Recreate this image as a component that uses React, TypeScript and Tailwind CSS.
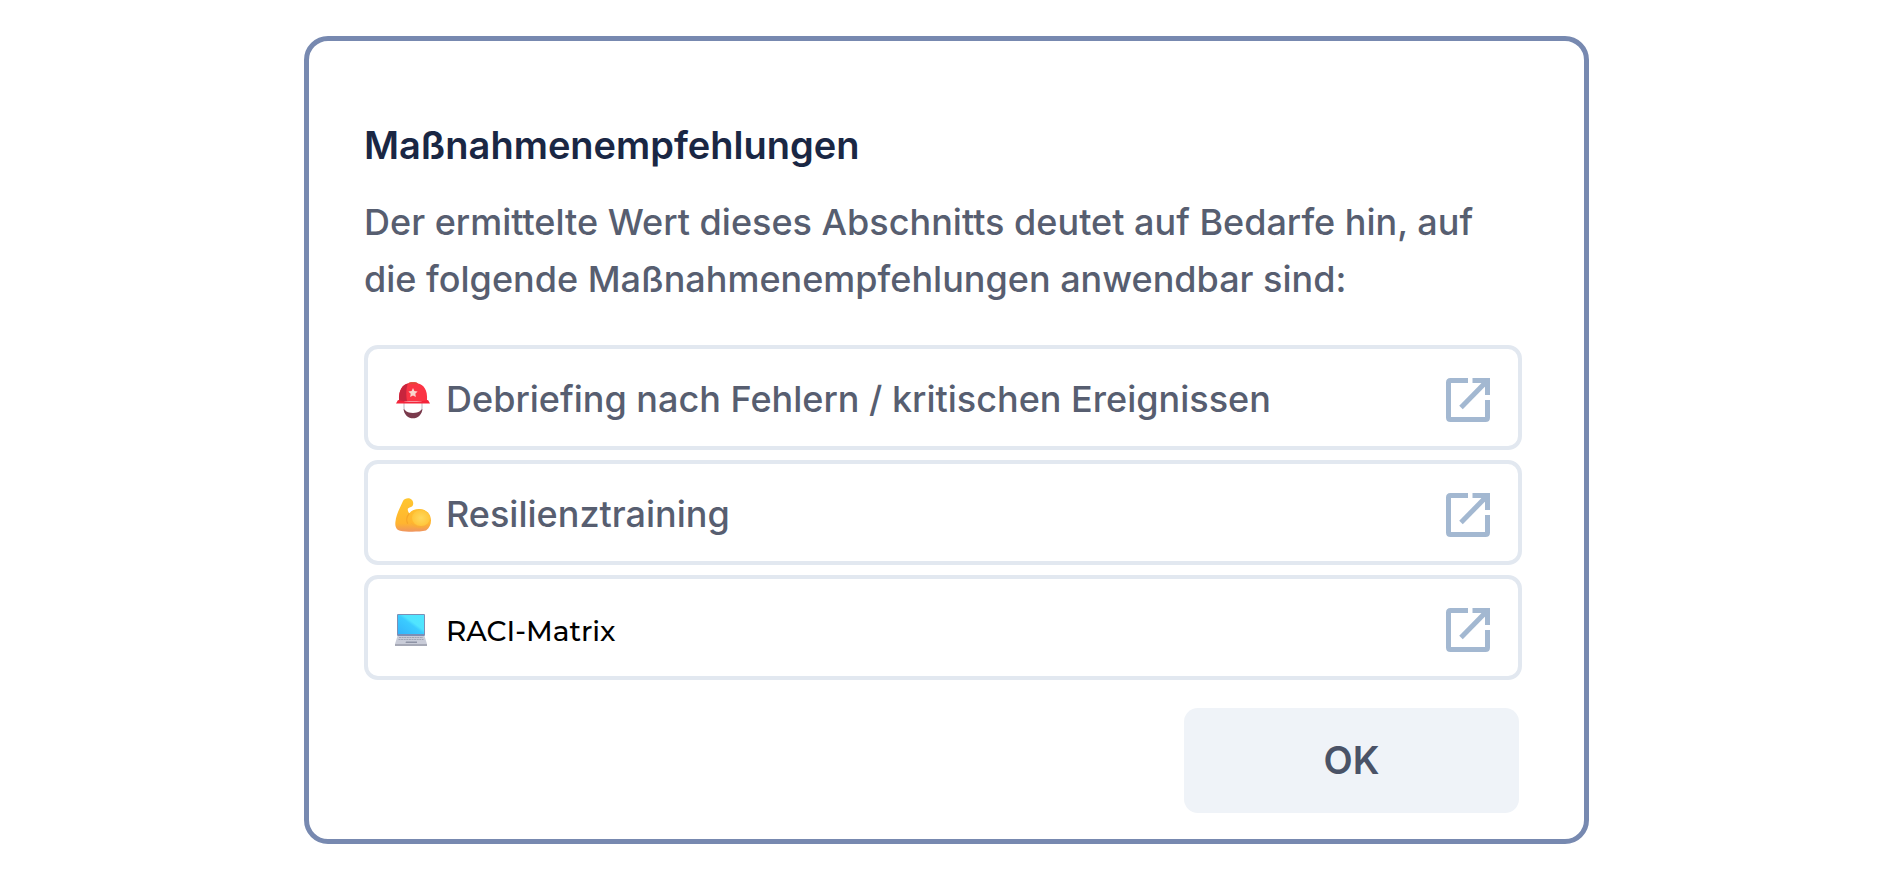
import type { ReactNode } from "react";

function HelmetIcon() {
  return (
    <svg viewBox="0 0 36 38" className="h-[38px] w-9 shrink-0" aria-hidden="true">
      <path d="M9 22v5c0 5 4 9 9 9s9-4 9-9v-5" fill="#fff" stroke="#c9c3cb" strokeWidth="1.2" />
      <path d="M8.500 28c2 1 3 4 9.500 4s7.500-3 9.500-4c-.8 6-4.700 9.300-9.500 9.300S9.300 34 8.500 28Z" fill="#7a3a4c" />
      <path d="M12 28.500c1.500 3 10.500 3 12 0v-2H12Z" fill="#fff" />
      <path d="M4 20C3.500 8 8 3.500 13 2.500c1-1.600 9-1.600 10 0C28 3.500 33 8 32 20Z" fill="#fb3444" />
      <path d="M4 20C3.500 8 8 3.500 13 2.500 11 7 11 14 12 20Z" fill="#c8253d" />
      <path d="M13 2.500c1-1.600 9-1.600 10 0-2.500 1-7.500 1-10 0Z" fill="#dd4a37" />
      <path d="M3 19c9 2 21 2 30 0l2 3.500H1Z" fill="#f3243a" />
      <path d="m18 7 1.400 3 3.200.4-2.300 2.300.6 3.300-2.900-1.600-2.900 1.600.6-3.300-2.300-2.300 3.200-.4Z" fill="#f9d5cd" />
    </svg>
  );
}

function BicepsIcon() {
  return (
    <svg viewBox="0 0 36 38" className="h-[38px] w-9 shrink-0" aria-hidden="true">
      <defs>
        <linearGradient id="skin" x1="0" y1="0" x2="0" y2="1">
          <stop offset="0" stopColor="#ffc62e" />
          <stop offset=".75" stopColor="#ffb52f" />
          <stop offset="1" stopColor="#ef9560" />
        </linearGradient>
        <radialGradient id="muscle">
          <stop offset="0" stopColor="#ffd95c" />
          <stop offset="1" stopColor="#ffc63b" />
        </radialGradient>
      </defs>
      <path
        d="M8 5c1.500-2.800 6-3.800 8.500-1.500 1.800 1.600 2.300 4.500 1 6.500-1 1.500-3.300 1.300-4.500 2.500-.7 1 .2 3.300 1.300 4.800 2.700-3.400 6.500-4.600 10.500-4.300C31.500 13.500 36 18 36 24.500c0 4-1.600 7.500-5 10-7 1.500-19 1.600-26 .2C.8 33.500 0 30 .4 26 1.200 18 5 12 8 5Z"
        fill="url(#skin)"
      />
      <ellipse cx="26" cy="22" rx="9" ry="8" fill="url(#muscle)" />
      <path d="M14.300 17.300c-2.500 3-3.300 7-1.600 10.500" fill="none" stroke="#f6a528" strokeWidth="1.200" />
      <path d="M16 27c3 3.500 8 5 13 3.500" fill="none" stroke="#f9b035" strokeWidth="1" />
    </svg>
  );
}

function LaptopIcon() {
  return (
    <svg viewBox="0 0 36 38" className="h-[38px] w-9 shrink-0" aria-hidden="true">
      <defs>
        <linearGradient id="screen" x1="0" y1="1" x2="1" y2="0">
          <stop offset="0" stopColor="#34b4fb" />
          <stop offset=".5" stopColor="#3bcbff" />
          <stop offset=".6" stopColor="#50e4ff" />
          <stop offset="1" stopColor="#4fe6ff" />
        </linearGradient>
      </defs>
      <rect x="2" y="3" width="28" height="22" rx="1" fill="#7d8fb5" />
      <rect x="3" y="4" width="26" height="19" fill="url(#screen)" />
      <path d="M2.500 25h27L32 33H0Z" fill="#c9ccd8" />
      <path d="M4 26.500h24M3.500 28.500h25" stroke="#a0a5b5" strokeWidth="1" strokeDasharray="2 .6" />
      <path d="M11 30.500h11v1.500H10.500Z" fill="#8e93a5" />
      <path d="M0 33h32v2H0Z" fill="#a6a9b6" />
    </svg>
  );
}

function OpenIcon() {
  return (
    <svg viewBox="0 0 44 44" className="size-11 shrink-0" fill="none" stroke="#a3b8d1" strokeWidth="5" aria-hidden="true">
      <path d="M22 2.500H4.500q-2 0-2 2v35q0 2 2 2h35q2 0 2-2V22" />
      <path d="M26.500 2.500h15V17" />
      <path d="M41 3 15 29.500" />
      <path d="M32 2h10v10Z" fill="#a3b8d1" stroke="none" />
    </svg>
  );
}

function Recommendation({ icon, children }: { icon: ReactNode; children: ReactNode }) {
  return (
    <li>
      <a
        href="#"
        className="flex h-[105px] items-center justify-between rounded-[14px] border-4 border-[#e2e8f0] bg-white pt-1 pr-7 pl-[27px]"
      >
        <span className="flex items-center gap-[15px]">
          {icon}
          {children}
        </span>
        <OpenIcon />
      </a>
    </li>
  );
}

export default function App() {
  return (
    <main className="flex min-h-screen items-start justify-center bg-white px-6 pt-9 pb-9 font-['Inter',sans-serif] text-[36px] leading-[57px] font-medium text-[#575e70]">
      <section
        aria-labelledby="title"
        className="w-full max-w-[1285px] rounded-[24px] border-5 border-[#7789b0] bg-white pt-[76px] pr-[62px] pb-[26px] pl-[55px]"
      >
        <h1 id="title" className="text-[38px] leading-[57px] font-semibold text-[#1a2744]">
          Maßnahmenempfehlungen
        </h1>
        <p className="mt-5">
          Der ermittelte Wert dieses Abschnitts deutet auf Bedarfe hin, auf die folgende Maßnahmenempfehlungen anwendbar
          sind:
        </p>
        <ul className="mt-[37px] flex flex-col gap-[10px]">
          <Recommendation icon={<HelmetIcon />}>Debriefing nach Fehlern / kritischen Ereignissen</Recommendation>
          <Recommendation icon={<BicepsIcon />}>Resilienztraining</Recommendation>
          <Recommendation icon={<LaptopIcon />}>
            <span className="pt-1 font-['Montserrat','Inter',sans-serif] text-[28px] font-medium text-black">
              RACI-Matrix
            </span>
          </Recommendation>
        </ul>
        <div className="mt-7 flex justify-end pr-[3px]">
          <button
            type="button"
            className="h-[105px] w-[335px] rounded-[14px] bg-[#eff3f8] text-[38px] font-semibold text-[#4a5367]"
          >
            OK
          </button>
        </div>
      </section>
    </main>
  );
}
